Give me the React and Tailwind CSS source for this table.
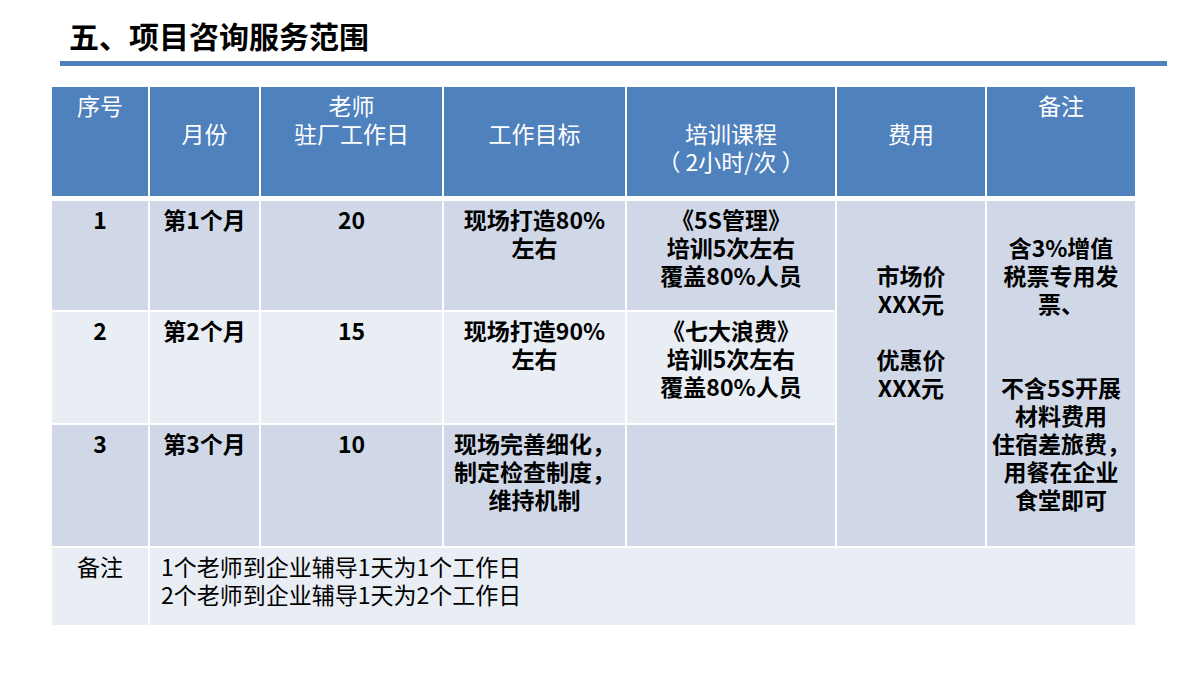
import React from "react";

const cols = "grid grid-cols-[96px_109px_181px_181px_208px_148px_148px] gap-x-[2px]";

const Lines = ({ lines }) => (
  <>
    {lines.map((l, i) => (
      <div key={i} className="whitespace-nowrap">
        {l || "\u00a0"}
      </div>
    ))}
  </>
);

const HeadCell = ({ lines }) => (
  <div className="bg-[#4f81bd] text-white text-center pt-[4px] text-[23px] leading-[28px]">
    <Lines lines={lines} />
  </div>
);

const Cell = ({ lines, bg, className = "" }) => (
  <div
    className={`${bg} text-black font-bold text-center text-[23px] leading-[28px] pt-[4px] ${className}`}
  >
    <Lines lines={lines} />
  </div>
);

const App = () => {
  const odd = "bg-[#d0d8e8]";
  const even = "bg-[#e9edf4]";
  return (
    <div className="w-[1200px] h-[675px] bg-white overflow-hidden font-['Noto_Sans_CJK_SC','Noto_Sans',sans-serif]">
      <h1 className="pl-[69px] pt-[20px] text-[30px] leading-[30px] font-bold text-black">
        五、项目咨询服务范围
      </h1>
      <div className="ml-[60px] mt-[11px] w-[1107px] h-[5px] bg-[#4f81bd]" />

      <div className="ml-[52px] mt-[21px] w-[1083px]">
        {/* header */}
        <div className={`${cols} h-[109px]`}>
          <HeadCell lines={["序号"]} />
          <HeadCell lines={["", "月份"]} />
          <HeadCell lines={["老师", "驻厂工作日"]} />
          <HeadCell lines={["", "工作目标"]} />
          <HeadCell lines={["", "培训课程", "（ 2小时/次 ）"]} />
          <HeadCell lines={["", "费用"]} />
          <HeadCell lines={["备注"]} />
        </div>

        {/* body */}
        <div className={`${cols} mt-[5px] grid-rows-[109px_111px_121px_77px] gap-y-[2px]`}>
          <Cell bg={odd} lines={["1"]} />
          <Cell bg={odd} lines={["第1个月"]} />
          <Cell bg={odd} lines={["20"]} />
          <Cell bg={odd} lines={["现场打造80%", "左右"]} />
          <Cell bg={odd} lines={["《5S管理》", "培训5次左右", "覆盖80%人员"]} />
          <Cell
            bg={odd}
            className="row-span-3"
            lines={["", "", "市场价", "XXX元", "", "优惠价", "XXX元"]}
          />
          <Cell
            bg={odd}
            className="row-span-3"
            lines={[
              "",
              "含3%增值",
              "税票专用发",
              "票、",
              "",
              "",
              "不含5S开展",
              "材料费用",
              "住宿差旅费，",
              "用餐在企业",
              "食堂即可",
            ]}
          />

          <Cell bg={even} lines={["2"]} />
          <Cell bg={even} lines={["第2个月"]} />
          <Cell bg={even} lines={["15"]} />
          <Cell bg={even} lines={["现场打造90%", "左右"]} />
          <Cell bg={even} lines={["《七大浪费》", "培训5次左右", "覆盖80%人员"]} />

          <Cell bg={odd} lines={["3"]} />
          <Cell bg={odd} lines={["第3个月"]} />
          <Cell bg={odd} lines={["10"]} />
          <Cell bg={odd} lines={["现场完善细化，", "制定检查制度，", "维持机制"]} />
          <Cell bg={odd} lines={[""]} />

          <div className={`${even} text-black text-center text-[23px] leading-[28px] pt-[4px]`}>
            备注
          </div>
          <div className={`${even} col-span-6 text-black text-[23px] leading-[28px] pt-[4px] pl-[11px]`}>
            <div>1个老师到企业辅导1天为1个工作日</div>
            <div>2个老师到企业辅导1天为2个工作日</div>
          </div>
        </div>
      </div>
    </div>
  );
};

export default App;
